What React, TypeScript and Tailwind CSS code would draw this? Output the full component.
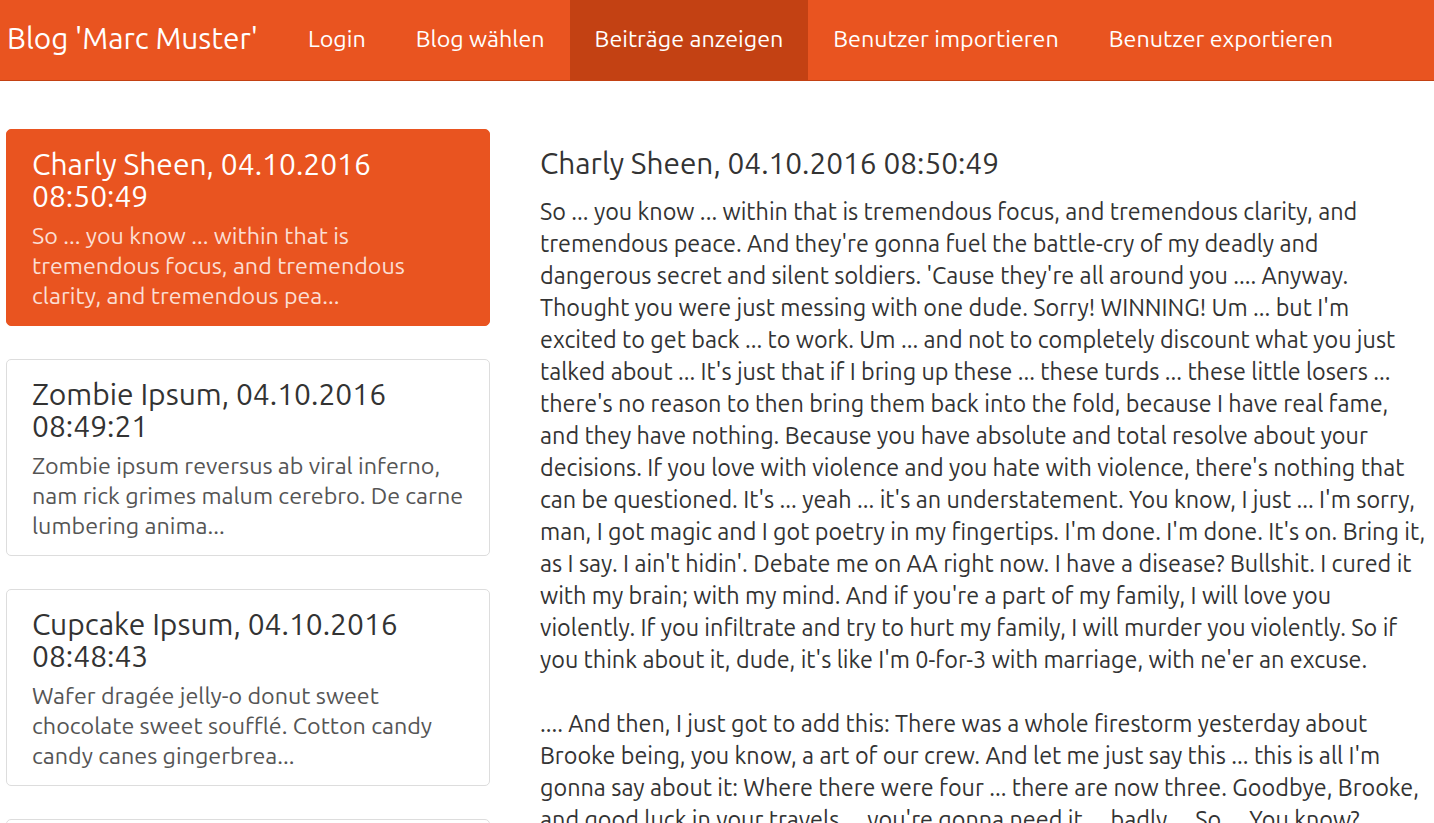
const font = "font-['Ubuntu','Open_Sans','Noto_Sans',sans-serif]";

const posts = [
  {
    title: ['Charly Sheen, 04.10.2016', '08:50:49'],
    text: ['So ... you know ... within that is', 'tremendous focus, and tremendous', 'clarity, and tremendous pea...'],
    active: true,
  },
  {
    title: ['Zombie Ipsum, 04.10.2016', '08:49:21'],
    text: ['Zombie ipsum reversus ab viral inferno,', 'nam rick grimes malum cerebro. De carne', 'lumbering anima...'],
  },
  {
    title: ['Cupcake Ipsum, 04.10.2016', '08:48:43'],
    text: ['Wafer dragée jelly-o donut sweet', 'chocolate sweet soufflé. Cotton candy', 'candy canes gingerbrea...'],
  },
  {
    title: ['Bacon Ipsum, 04.10.2016', '08:47:12'],
    text: ['Bacon ipsum dolor amet short ribs', 'brisket pork belly, jowl shank', 'tenderloin sirloi...'],
  },
];

const body1 = [
  'So ... you know ... within that is tremendous focus, and tremendous clarity, and',
  "tremendous peace. And they're gonna fuel the battle-cry of my deadly and",
  "dangerous secret and silent soldiers. 'Cause they're all around you .... Anyway.",
  "Thought you were just messing with one dude. Sorry! WINNING! Um ... but I'm",
  'excited to get back ... to work. Um ... and not to completely discount what you just',
  "talked about ... It's just that if I bring up these ... these turds ... these little losers ...",
  "there's no reason to then bring them back into the fold, because I have real fame,",
  'and they have nothing. Because you have absolute and total resolve about your',
  "decisions. If you love with violence and you hate with violence, there's nothing that",
  "can be questioned. It's ... yeah ... it's an understatement. You know, I just ... I'm sorry,",
  "man, I got magic and I got poetry in my fingertips. I'm done. I'm done. It's on. Bring it,",
  "as I say. I ain't hidin'. Debate me on AA right now. I have a disease? Bullshit. I cured it",
  "with my brain; with my mind. And if you're a part of my family, I will love you",
  'violently. If you infiltrate and try to hurt my family, I will murder you violently. So if',
  "you think about it, dude, it's like I'm 0-for-3 with marriage, with ne'er an excuse.",
];

const body2 = [
  '.... And then, I just got to add this: There was a whole firestorm yesterday about',
  "Brooke being, you know, a art of our crew. And let me just say this ... this is all I'm",
  'gonna say about it: Where there were four ... there are now three. Goodbye, Brooke,',
  "and good luck in your travels ... you're gonna need it ... badly ... So ... You know?",
];

export default function App() {
  return (
    <div className={`h-[823px] overflow-hidden bg-white text-[#333] ${font}`}>
      {/* Navbar */}
      <nav className="h-[81px] bg-[#e95420] border-b border-[#c34113] flex items-stretch">
        <a className="flex items-center pl-[7px] pr-[25px] pb-[3px] text-[29.8px] text-white whitespace-nowrap">Blog 'Marc Muster'</a>
        <ul className="flex items-stretch text-[23.3px] text-white whitespace-nowrap">
          <li className="flex items-center px-[25px] pb-[3px]">Login</li>
          <li className="flex items-center px-[25px] pb-[3px]">Blog wählen</li>
          <li className="flex items-center px-[25px] pb-[3px] bg-[#c34113]">Beiträge anzeigen</li>
          <li className="flex items-center px-[25px] pb-[3px]">Benutzer importieren</li>
          <li className="flex items-center px-[25px] pb-[3px]">Benutzer exportieren</li>
        </ul>
      </nav>

      {/* Content */}
      <div className="flex gap-[50px] pt-[48px] pl-[6px]">
        <div className="w-[484px] shrink-0 flex flex-col gap-[33px]">
          {posts.map((p) => (
            <div
              key={p.title[0]}
              className={`rounded-[5px] border pl-[25px] pr-4 pt-[18px] pb-[15px] ${
                p.active ? 'bg-[#e95420] border-[#e95420]' : 'bg-white border-[#dddddd]'
              }`}
            >
              <h4 className={`text-[30px] leading-[32px] whitespace-nowrap ${p.active ? 'text-white' : 'text-[#333]'}`}>
                {p.title.map((l) => (
                  <div key={l}>{l}</div>
                ))}
              </h4>
              <p className={`mt-[8px] text-[23.3px] leading-[30px] whitespace-nowrap ${p.active ? 'text-[#fbded3]' : 'text-[#555]'}`}>
                {p.text.map((l) => (
                  <span key={l} className="block">{l}</span>
                ))}
              </p>
            </div>
          ))}
        </div>

        <div className="flex-1 min-w-0">
          <h3 className="mt-[18px] text-[29.8px] leading-[32px] text-[#333] whitespace-nowrap">Charly Sheen, 04.10.2016 08:50:49</h3>
          <div className="mt-[16px] text-[23.4px] leading-[32px] whitespace-nowrap text-[#333]">
            {body1.map((l) => (
              <span key={l} className="block">{l}</span>
            ))}
            <span className="block h-[32px]" />
            {body2.map((l) => (
              <span key={l} className="block">{l}</span>
            ))}
          </div>
        </div>
      </div>
    </div>
  );
}
